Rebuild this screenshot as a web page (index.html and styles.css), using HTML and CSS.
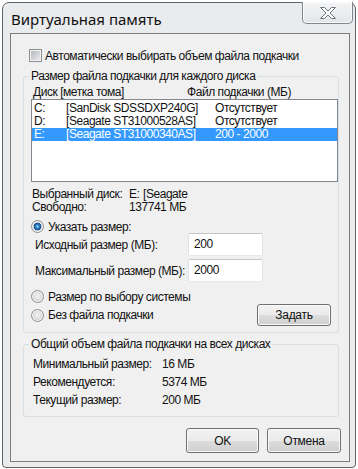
FILE: index.html
```html
<!DOCTYPE html>
<html lang="ru">
<head>
<meta charset="utf-8">
<title>Виртуальная память</title>
<link rel="stylesheet" href="styles.css">
</head>
<body>
<div class="window">
  <div class="titlebar">
    <span class="title">Виртуальная память</span>
    <div class="close">
      <svg width="16" height="12" viewBox="0 0 16 12"><polygon points="0.5,0.5 4.5,0.5 8,4 11.5,0.5 15.5,0.5 10,6 15.5,11.5 11.5,11.5 8,8 4.5,11.5 0.5,11.5 6,6" fill="#fdfdfd" stroke="#6d737a" stroke-width="1" stroke-linejoin="round"/></svg>
    </div>
  </div>
  <div class="client">
    <div class="chk-row"><span class="checkbox"></span><span>Автоматически выбирать объем файла подкачки</span></div>

    <fieldset class="group g1">
      <legend>Размер файла подкачки для каждого диска</legend>
      <div class="colhead"><span class="hc1">Диск [метка тома]</span><span>Файл подкачки (МБ)</span></div>
      <div class="listbox">
        <div class="row"><span class="cd">C:</span><span class="cl">[SanDisk SDSSDXP240G]</span><span>Отсутствует</span></div>
        <div class="row"><span class="cd">D:</span><span class="cl">[Seagate ST31000528AS]</span><span>Отсутствует</span></div>
        <div class="row sel"><span class="cd">E:</span><span class="cl">[Seagate ST31000340AS]</span><span>200 - 2000</span></div>
      </div>
      <div class="info first"><span class="il">Выбранный диск:</span><span class="iv1">E:</span><span>[Seagate</span></div>
      <div class="info"><span class="il">Свободно:</span><span>137741 МБ</span></div>

      <div class="radio-row r1"><span class="radio on"></span><span>Указать размер:</span></div>
      <div class="field-row"><span class="fl">Исходный размер (МБ):</span><span class="edit">200</span></div>
      <div class="field-row f2"><span class="fl">Максимальный размер (МБ):</span><span class="edit">2000</span></div>
      <div class="radio-row r2"><span class="radio"></span><span>Размер по выбору системы</span></div>
      <div class="radio-row r3">
        <span class="ropt"><span class="radio"></span><span>Без файла подкачки</span></span>
        <button class="btn btn-set">Задать</button>
      </div>
    </fieldset>

    <fieldset class="group g2">
      <legend>Общий объем файла подкачки на всех дисках</legend>
      <div class="trow first"><span class="tl">Минимальный размер:</span><span>16 МБ</span></div>
      <div class="trow"><span class="tl">Рекомендуется:</span><span>5374 МБ</span></div>
      <div class="trow"><span class="tl">Текущий размер:</span><span>200 МБ</span></div>
    </fieldset>

    <div class="buttons">
      <button class="btn btn-ok">OK</button>
      <button class="btn btn-cancel">Отмена</button>
    </div>
  </div>
</div>
</body>
</html>
```

FILE: styles.css
```css
* { box-sizing: border-box; }

body {
  margin: 0;
  background: #ffffff;
  font-family: "Liberation Sans", Arial, sans-serif;
  font-size: 12px;
  letter-spacing: -0.45px;
  color: #111;
}

.window {
  margin: 2px;
  width: 354px;
  height: 466px;
  border: 1px solid #5f6368;
  border-radius: 7px 7px 4px 4px;
  background: #e9ebed;
  padding: 0 5px 5px 7px;
  display: flex;
  flex-direction: column;
}

.titlebar {
  height: 30px;
  flex: none;
  display: flex;
  align-items: flex-start;
}

.title {
  font-family: "Noto Sans", sans-serif;
  font-size: 15px;
  letter-spacing: 0;
  line-height: 20px;
  margin-top: 6px;
  margin-left: 1px;
  white-space: nowrap;
}

.close {
  margin-left: auto;
  margin-right: -3px;
  margin-top: -1px;
  width: 51px;
  height: 22px;
  border: 1px solid #80868d;
  border-top: none;
  border-radius: 0 0 5px 5px;
  background: linear-gradient(#f3f4f5, #e3e5e8);
  box-shadow: inset 0 0 0 1px #fafafa;
  display: flex;
  align-items: center;
  justify-content: center;
}

.client {
  flex: 1;
  border: 1px solid #7d7d7d;
  background: #f0f0f0;
  display: flex;
  flex-direction: column;
}

.chk-row {
  display: flex;
  align-items: center;
  height: 13px;
  margin: 15px 0 0 18px;
  gap: 3px;
  white-space: nowrap;
}

.checkbox {
  position: relative;
  width: 13px;
  height: 13px;
  flex: none;
  border: 1px solid #8e8f8f;
  background: #f4f4f4;
}
.checkbox::after {
  content: "";
  position: absolute;
  left: 1px;
  top: 1px;
  width: 9px;
  height: 9px;
  background: linear-gradient(135deg, #b3b7bd, #ebebec);
}

.group {
  margin: 0 0 0 12px;
  width: 316px;
  padding: 0 0 6px 0;
  border: 1px solid #d5dfe5;
  border-radius: 3px;
  min-width: 0;
}
.group legend {
  margin-left: 5px;
  padding: 0 2px;
  line-height: 14px;
  white-space: nowrap;
}
.g1 { margin-top: 7px; }
.g2 { margin-top: 4px; padding-bottom: 7px; }

.colhead {
  display: flex;
  margin-top: 2px;
  height: 14px;
  line-height: 14px;
  padding-left: 9px;
  white-space: nowrap;
}
.hc1 { width: 154px; }

.listbox {
  margin-left: 7px;
  width: 307px;
  height: 83px;
  border: 1px solid #828790;
  background: #fff;
  padding-top: 2px;
}
.row {
  display: flex;
  height: 13px;
  line-height: 13px;
  padding-left: 2px;
  white-space: nowrap;
}
.row .cd { width: 32px; }
.row .cl { width: 149px; }
.row.sel { background: #3399ff; color: #fff; }

.info {
  display: flex;
  line-height: 13px;
  height: 13px;
  padding-left: 8px;
  white-space: nowrap;
}
.info.first { margin-top: 6px; }
.il { width: 97px; }
.iv1 { width: 14px; }

.radio-row {
  display: flex;
  align-items: center;
  height: 13px;
  padding-left: 7px;
  gap: 4px;
  white-space: nowrap;
}
.r1 { margin-top: 6px; }
.r2 { margin-top: 8px; }
.r3 {
  margin-top: 1px;
  height: 22px;
  justify-content: space-between;
  padding-right: 7px;
}
.ropt { display: flex; align-items: center; gap: 4px; }

.radio {
  width: 13px;
  height: 13px;
  flex: none;
  border-radius: 50%;
  border: 1px solid #8e8f8f;
  background: radial-gradient(circle at 50% 45%, #f2f2f2 0, #e4e4e4 3px, #c9cbce 6px);
  box-shadow: inset 0 0 0 1px #f6f6f6;
}
.radio.on {
  background:
    radial-gradient(circle at 50% 50%, #a9d3f5 0, #3c8ed3 1.5px, #1b5b9e 3px, #2a5f8f 3.6px, rgba(255,255,255,0) 4.2px),
    radial-gradient(circle at 50% 45%, #f2f2f2 0, #e4e4e4 3px, #c9cbce 6px);
}

.field-row {
  display: flex;
  align-items: center;
  height: 23px;
  padding-left: 11px;
  white-space: nowrap;
}
.f2 { margin-top: 3px; }
.fl { width: 153px; }
.edit {
  width: 75px;
  height: 23px;
  border: 1px solid;
  border-color: #c3c6cb #dfe2e7 #e5e8ec #dfe2e7;
  border-radius: 2px;
  background: #fff;
  padding-left: 5px;
  line-height: 21px;
}

.btn {
  font-family: inherit;
  font-size: 12px;
  letter-spacing: -0.3px;
  color: #111;
  border: 1px solid #707070;
  border-radius: 3px;
  background: linear-gradient(#f2f2f2 0%, #ebebeb 50%, #dddddd 51%, #cfcfcf 100%);
  box-shadow: inset 0 0 0 1px #fbfbfb;
  padding: 0;
  margin: 0;
}
.btn-set { width: 74px; height: 22px; }

.trow {
  display: flex;
  height: 18px;
  line-height: 18px;
  padding-left: 9px;
  white-space: nowrap;
}
.trow.first { margin-top: 4px; }
.tl { width: 129px; }

.buttons {
  display: flex;
  justify-content: flex-end;
  gap: 8px;
  margin-top: 11px;
  padding-right: 8px;
}
.btn-ok { width: 73px; height: 25px; }
.btn-cancel { width: 74px; height: 25px; }
```
